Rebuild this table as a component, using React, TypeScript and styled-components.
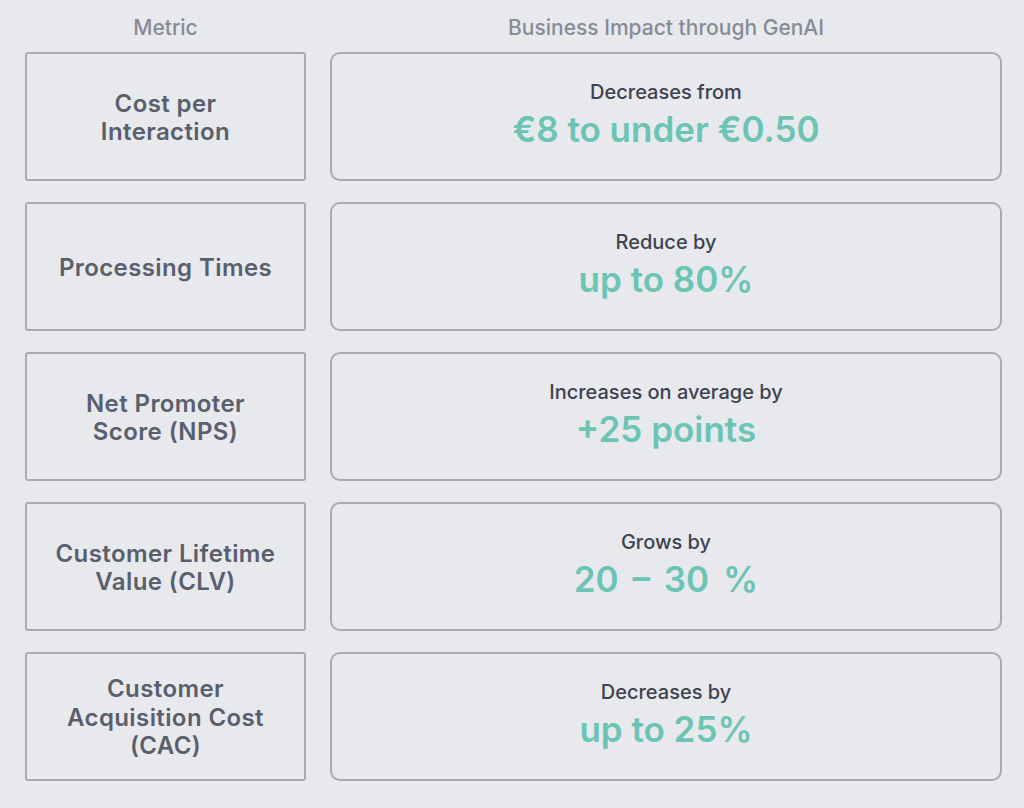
import React from "react";
import styled, { createGlobalStyle } from "styled-components";

const Global = createGlobalStyle`
  html, body { margin: 0; padding: 0; background: #e8e9ed; }
  body { font-family: Inter, "Noto Sans", "Liberation Sans", sans-serif; }
`;

const Page = styled.div`
  width: 1024px;
  height: 808px;
  box-sizing: border-box;
  padding: 16px 22px 0 25px;
  display: flex;
  flex-direction: column;
  background: #e8e9ed;
`;

const Columns = styled.div<{ $gap: number }>`
  display: grid;
  grid-template-columns: 281px 672px;
  column-gap: 24px;
  row-gap: ${(p) => p.$gap}px;
`;

const HeaderRow = styled(Columns)`
  height: 24px;
  margin-bottom: 12px;
`;

const HeaderCell = styled.div`
  display: flex;
  align-items: center;
  justify-content: center;
  font-size: 21px;
  line-height: 24px;
  font-weight: 500;
  color: #868b95;
`;

const Table = styled(Columns)`
  grid-auto-rows: 129px;
`;

const MetricBox = styled.div`
  box-sizing: border-box;
  border: 2px solid #a8abb1;
  border-radius: 3px;
  display: flex;
  align-items: center;
  justify-content: center;
  text-align: center;
  padding: 3px 8px 0;
  font-size: 24px;
  letter-spacing: 0.4px;
  line-height: 28.5px;
  font-weight: 600;
  color: #595f6c;
`;

const ImpactBox = styled.div`
  box-sizing: border-box;
  border: 2px solid #a8abb1;
  border-radius: 10px;
  display: flex;
  flex-direction: column;
  align-items: center;
  justify-content: center;
  text-align: center;
  gap: 5px;
  padding-bottom: 4px;
`;

const Label = styled.div`
  font-size: 20px;
  line-height: 24px;
  font-weight: 500;
  color: #3d4250;
`;

const Value = styled.div<{ $wordSpacing?: number }>`
  font-size: 35px;
  line-height: 40px;
  font-weight: 600;
  color: #6cc4b5;
  word-spacing: ${(p) => p.$wordSpacing ?? 0}px;
`;

const rows: { metric: React.ReactNode; label: string; value: string; ws?: number }[] = [
  { metric: <>Cost per<br />Interaction</>, label: "Decreases from", value: "€8 to under €0.50" },
  { metric: <>Processing Times</>, label: "Reduce by", value: "up to 80%" },
  { metric: <>Net Promoter<br />Score (NPS)</>, label: "Increases on average by", value: "+25 points" },
  { metric: <>Customer Lifetime<br />Value (CLV)</>, label: "Grows by", value: "20 – 30 %", ws: 5 },
  { metric: <>Customer<br />Acquisition Cost<br />(CAC)</>, label: "Decreases by", value: "up to 25%" },
];

export default function App() {
  return (
    <>
      <Global />
      <Page>
        <HeaderRow $gap={0}>
          <HeaderCell>Metric</HeaderCell>
          <HeaderCell>Business Impact through GenAI</HeaderCell>
        </HeaderRow>
        <Table $gap={21}>
          {rows.map((r, i) => (
            <React.Fragment key={i}>
              <MetricBox>{r.metric}</MetricBox>
              <ImpactBox>
                <Label>{r.label}</Label>
                <Value $wordSpacing={r.ws}>{r.value}</Value>
              </ImpactBox>
            </React.Fragment>
          ))}
        </Table>
      </Page>
    </>
  );
}
